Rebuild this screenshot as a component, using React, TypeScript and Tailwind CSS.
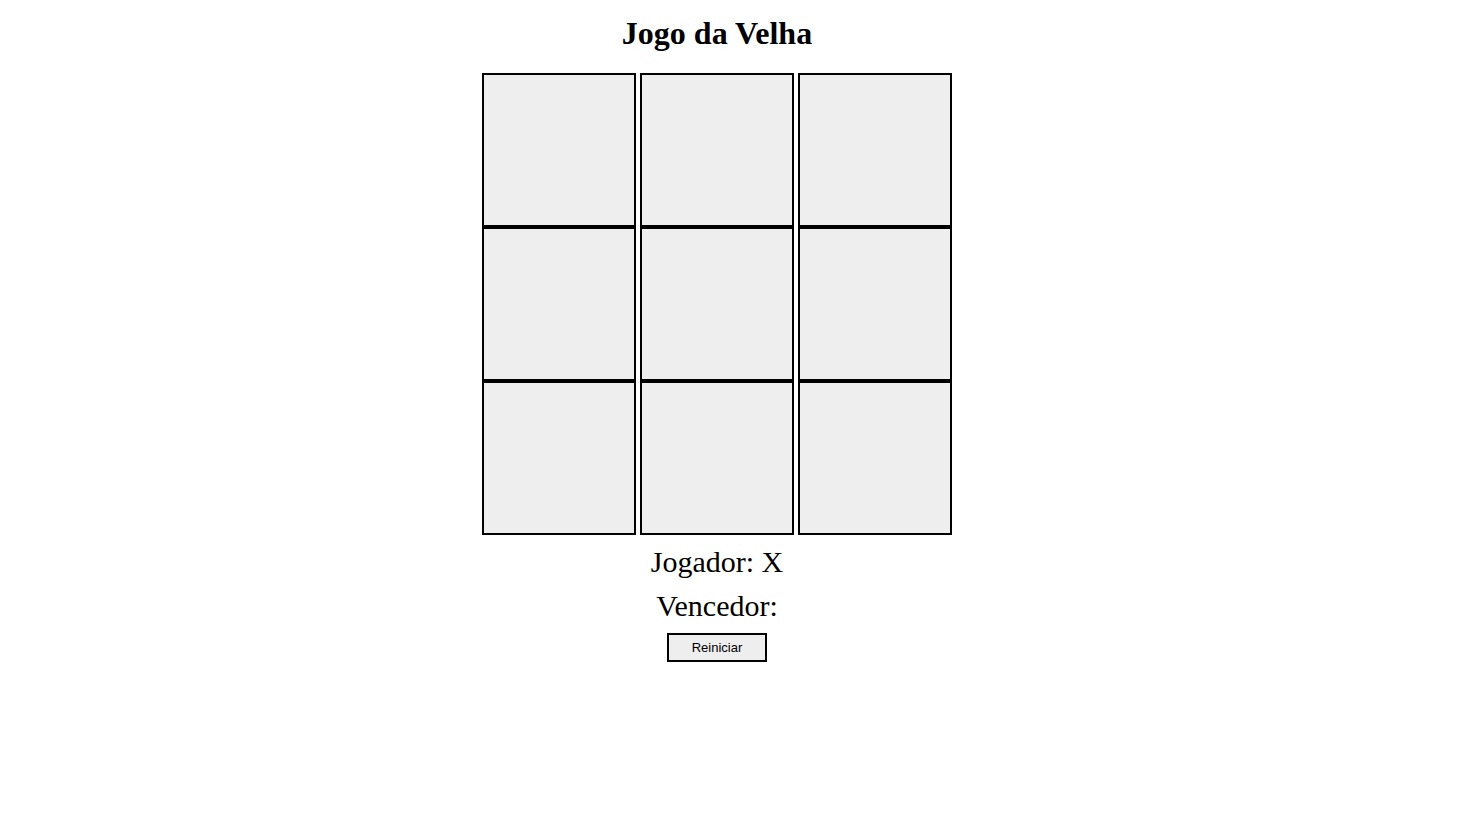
import React, { useState } from 'react';

const serif = { fontFamily: '"Liberation Serif", "Times New Roman", serif' };

export default function App() {
  const [cells, setCells] = useState<string[]>(Array(9).fill(''));
  const [player, setPlayer] = useState('X');
  const [winner, setWinner] = useState('');

  const lines = [
    [0, 1, 2], [3, 4, 5], [6, 7, 8],
    [0, 3, 6], [1, 4, 7], [2, 5, 8],
    [0, 4, 8], [2, 4, 6],
  ];

  const play = (i: number) => {
    if (cells[i] || winner) return;
    const next = [...cells];
    next[i] = player;
    setCells(next);
    const won = lines.find(([a, b, c]) => next[a] && next[a] === next[b] && next[a] === next[c]);
    if (won) setWinner(player);
    setPlayer(player === 'X' ? 'O' : 'X');
  };

  const reset = () => {
    setCells(Array(9).fill(''));
    setPlayer('X');
    setWinner('');
  };

  return (
    <div className="w-[1434px] min-h-[818px] bg-white flex flex-col items-center text-black" style={serif}>
      <h1 className="mt-[15px] text-[32px] leading-[36px] font-bold">Jogo da Velha</h1>

      <div className="mt-[22px] grid grid-cols-[154px_154px_154px] gap-x-1 gap-y-0">
        {cells.map((c, i) => (
          <button
            key={i}
            onClick={() => play(i)}
            className="w-[154px] h-[154px] border-2 border-black bg-[#eeeeee] text-[64px] flex items-center justify-center"
            style={serif}
          >
            {c}
          </button>
        ))}
      </div>

      <div className="mt-[5px] text-[30px] leading-[44px]">Jogador: {player}</div>
      <div className="text-[30px] leading-[44px]">Vencedor: {winner}</div>

      <button
        onClick={reset}
        className="mt-[5px] w-[100px] h-[29px] border-2 border-black bg-[#eeeeee] text-[13px] text-black"
        style={{ fontFamily: '"Liberation Sans", Arial, sans-serif' }}
      >
        Reiniciar
      </button>
    </div>
  );
}
